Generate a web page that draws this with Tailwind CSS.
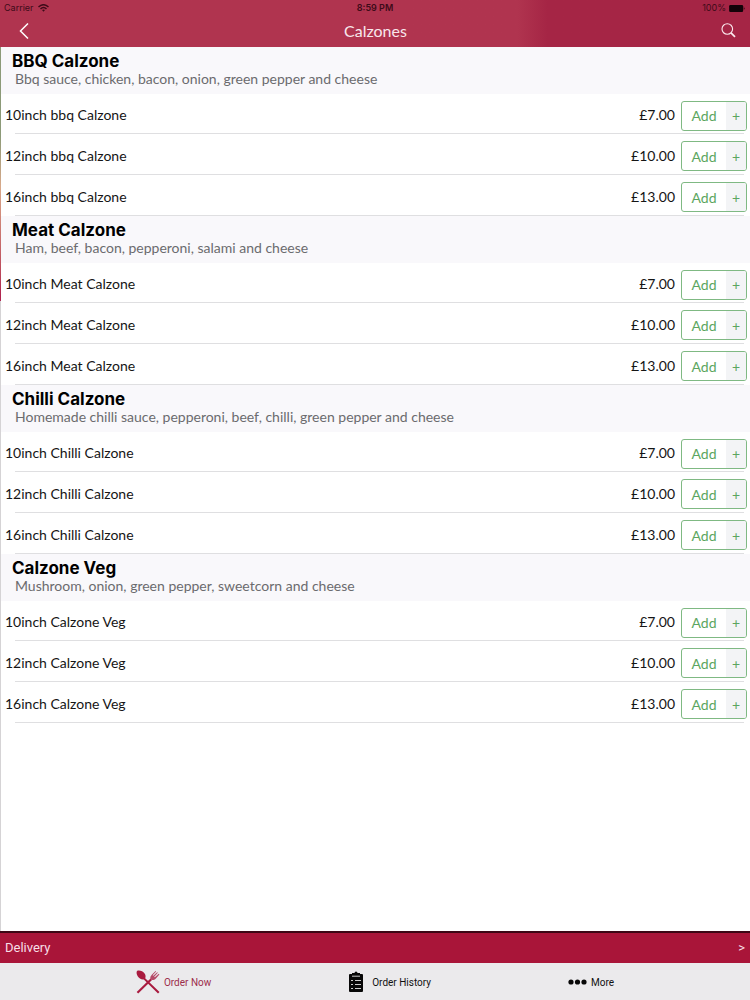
<!DOCTYPE html>
<html lang="en">
<head>
<meta charset="utf-8">
<meta name="viewport" content="width=device-width, initial-scale=1">
<title>Calzones</title>
<script src="https://cdn.jsdelivr.net/npm/@tailwindcss/browser@4"></script>
</head>
<body class="flex min-h-screen flex-col bg-white font-['Lato',sans-serif] text-[#151515]">
<header class="bg-linear-to-r from-[#b0344f] from-69% to-[#a52545] to-73% pb-[2px] text-white">
  <div class="grid h-4 grid-cols-3 items-center px-1 font-['Inter',sans-serif] text-[9px] text-[#3d0b19]">
    <div class="flex items-center gap-1">
      <span>Carrier</span>
      <svg class="h-2 w-[11px]" viewBox="0 0 22 16" fill="none" stroke="currentColor" stroke-width="3" aria-hidden="true"><path d="M1 6Q11-3 21 6M5 10Q11 4 17 10"/><path d="M8 12Q11 9.500 14 12L11 15.500Z" fill="currentColor" stroke="none"/></svg>
    </div>
    <span class="text-center font-semibold">8:59 PM</span>
    <div class="flex items-center justify-end gap-[2px]">
      <span>100%</span>
      <svg class="h-[7px] w-[18px]" viewBox="0 0 18 8" aria-hidden="true"><rect width="16" height="8" rx="1.500" fill="#130208"/><path d="M16.700 2.500v3q1-.4 1-1.500t-1-1.500" fill="#130208"/></svg>
    </div>
  </div>
  <div class="grid h-[29px] grid-cols-3 items-center pr-[14px] pl-[15px]">
    <button type="button" aria-label="Back" class="flex h-6 w-6 items-center">
      <svg class="ml-1 h-4 w-[10px]" viewBox="0 0 10 16" fill="none" stroke="#fff" stroke-width="1.500" aria-hidden="true"><path d="M9 .5 1.500 8 9 15.500"/></svg>
    </button>
    <h1 class="text-center text-[16px] leading-5 text-[#f8e6eb]">Calzones</h1>
    <button type="button" aria-label="Search" class="justify-self-end">
      <svg class="h-[15px] w-[15px]" viewBox="0 0 15 15" fill="none" stroke="#fbe9ee" aria-hidden="true"><circle cx="6.300" cy="6" r="5.300" stroke-width="1.100"/><path d="m10 9.800 4 4" stroke-width="1.800"/></svg>
    </button>
  </div>
</header>
<div class="flex grow">
  <div class="w-px shrink-0 bg-[#d5d3d5]"><div class="h-[254px] bg-linear-to-b from-[#8c9a78] from-35% via-[#d9a98a] via-55% to-[#b0244f] to-98%"></div></div>
  <main id="menu" class="grow"></main>
</div>
<a href="#delivery" class="flex h-8 items-center justify-between border-t-2 border-[#3d0715] bg-[#a91539] px-[5px] font-['Roboto',sans-serif] text-[13px] text-[#f7dfe6]">
  <span>Delivery</span><span>&gt;</span>
</a>
<nav class="flex h-[37px] items-center justify-center gap-[137px] bg-[#ebeaec] pt-px font-['Roboto',sans-serif] text-[10px] text-[#111]">
  <a href="#order" class="flex items-center gap-1 text-[#9c2d4b]">
    <svg class="h-6 w-6" viewBox="0 0 24 24" fill="#a91b3f" aria-hidden="true"><path d="M1 1C3 0 7 1 8.600 3.500c1.200 1.800 1.200 3.500.6 4.700L23.500 22 22 23.500 7.800 9.400C5.500 9.800 3 8.600 1.700 6.300.6 4.300.2 2.300 1 1Z"/><path d="M.7 22 14.500 8.500 16 10 2.200 23.500Z"/><path fill="#b54a67" d="M14.500 9.500c-.6-2 0-3.500 1.500-5L19.500 1l.6.6-3.400 3.600.6.6 3.900-3.600.6.6-3.600 3.900.6.6 4-3.500.6.6-3.500 4c-1.500 1.500-3.500 2-5.400 1.100Z"/></svg>
    <span>Order Now</span>
  </a>
  <a href="#history" class="flex items-center gap-2">
    <svg class="h-[22px] w-4" viewBox="0 0 16 22" aria-hidden="true"><path d="M2 3h2V2h2.500a1.500 1.500 0 0 1 3 0H12v1h2q1 0 1 1v16q0 1-1 1H2q-1 0-1-1V4q0-1 1-1Z" fill="#080808"/><path d="M4 5.200h8M3 9.500h2M3 13.500h2M3 17.500h2M7 9.500h6M7 13.500h6M7 17.500h6" stroke="#ccc" stroke-width="1"/></svg>
    <span>Order History</span>
  </a>
  <a href="#more" class="flex items-center gap-1">
    <svg class="h-[6px] w-[19px]" viewBox="0 0 19 6" fill="#080808" aria-hidden="true"><circle cx="3" cy="3" r="2.600"/><circle cx="9.500" cy="3" r="2.600"/><circle cx="16" cy="3" r="2.600"/></svg>
    <span>More</span>
  </a>
</nav>
<script>
const groups = [
  ["BBQ Calzone", "Bbq sauce, chicken, bacon, onion, green pepper and cheese", "bbq Calzone"],
  ["Meat Calzone", "Ham, beef, bacon, pepperoni, salami and cheese", "Meat Calzone"],
  ["Chilli Calzone", "Homemade chilli sauce, pepperoni, beef, chilli, green pepper and cheese", "Chilli Calzone"],
  ["Calzone Veg", "Mushroom, onion, green pepper, sweetcorn and cheese", "Calzone Veg"]
];
const sizes = [["10inch", "£7.00"], ["12inch", "£10.00"], ["16inch", "£13.00"]];
document.getElementById("menu").innerHTML = groups.map(([title, text, item]) => `
<section>
  <div class="h-[47px] bg-[#f9f8fb] pt-[5px] pl-[11px]">
    <h2 class="font-['Inter',sans-serif] text-[17px] leading-[19px] font-bold text-black">${title}</h2>
    <p class="pl-[3px] text-[14px] leading-4 text-[#6b6b6e]">${text}</p>
  </div>
  <ul>${sizes.map(([size, price]) => `
    <li class="relative flex h-[41px] items-center pr-[3px] pl-1 text-[14px] first:h-10 after:absolute after:right-[6px] after:bottom-0 after:left-[14px] after:h-px after:bg-[#dfdfe1]">
      <span class="grow pt-px">${size} ${item}</span>
      <span class="pt-px pr-[6px]">${price}</span>
      <button type="button" class="mt-[3px] flex h-[30px] w-[66px] overflow-hidden rounded-[3px] border border-[#7fb983] text-[14px] text-[#5ba660]" aria-label="Add ${size} ${item}">
        <span class="flex h-full grow items-center justify-center">Add</span>
        <span class="flex h-full w-5 items-center justify-center bg-[#f3f4f6]">+</span>
      </button>
    </li>`).join("")}
  </ul>
</section>`).join("");
</script>
</body>
</html>
